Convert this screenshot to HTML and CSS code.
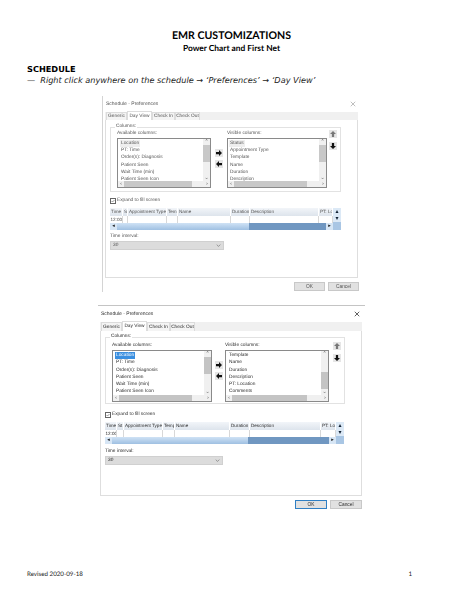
FILE: index.html
```html
<!DOCTYPE html>
<html lang="en">
<head>
<meta charset="utf-8">
<title>EMR Customizations</title>
<link rel="stylesheet" href="styles.css">
</head>
<body>
<main class="page">
  <header class="doc-head">
    <h1>EMR CUSTOMIZATIONS</h1>
    <h2>Power Chart and First Net</h2>
  </header>
  <h3 class="section">SCHEDULE</h3>
  <p class="step"><span class="dash">—</span><em>Right click anywhere on the schedule → ‘Preferences’ → ‘Day View’</em></p>

  <section class="dialog dialog-a">
    <div class="titlebar"><span>Schedule - Preferences</span>
      <svg class="close" viewBox="0 0 8 8"><path d="M1 1l6 6M7 1l-6 6"/></svg></div>
    <div class="tabs"><span class="tab t1">Generic</span><span class="tab t2 on">Day View</span><span class="tab t3">Check In</span><span class="tab t4">Check Out</span></div>
    <div class="panel">
      <fieldset class="group">
        <legend>Columns:</legend>
        <div class="cols">
          <div class="col col-left">
            <div class="cap">Available columns:</div>
            <div class="list">
              <ul><li><b class="soft">Location</b></li><li>PT: Time</li><li>Order(s): Diagnosis</li><li>Patient Seen</li><li>Wait Time (min)</li><li>Patient Seen Icon</li></ul>
              <div class="vbar"><i>⌃</i><s class="th-top"></s><i>⌄</i></div>
              <div class="hbar"><i>‹</i><s></s><i>›</i></div>
            </div>
          </div>
          <div class="movers">
            <button class="icon"><svg viewBox="0 0 8 8"><path d="M0 2.500h4V0l4 4-4 4V5.500H0z"/></svg></button>
            <button class="icon"><svg viewBox="0 0 8 8"><path d="M8 2.500H4V0L0 4l4 4V5.500h4z"/></svg></button>
          </div>
          <div class="col col-right">
            <div class="cap">Visible columns:</div>
            <div class="list">
              <ul><li><b class="soft">Status</b></li><li>Appointment Type</li><li>Template</li><li>Name</li><li>Duration</li><li>Description</li></ul>
              <div class="vbar"><i>⌃</i><s class="th-top"></s><i>⌄</i></div>
              <div class="hbar"><i>‹</i><s></s><i>›</i></div>
            </div>
          </div>
          <div class="order">
            <button class="icon pale"><svg viewBox="0 0 8 8"><path d="M2.500 8V4H0l4-4 4 4H5.500v4z"/></svg></button>
            <button class="icon"><svg viewBox="0 0 8 8"><path d="M2.500 0v4H0l4 4 4-4H5.500V0z"/></svg></button>
          </div>
        </div>
      </fieldset>
      <label class="check"><span class="box"><svg viewBox="0 0 8 8"><path d="M1 4l2 2 4-4"/></svg></span>Expand to fill screen</label>
      <div class="table">
        <div class="thead"><span>Time</span><span>St</span><span>Appointment Type</span><span>Temp</span><span>Name</span><span>Duration</span><span>Description</span><span>PT: Lo</span></div>
        <div class="trow"><span>12:00</span><span></span><span></span><span></span><span></span><span></span><span></span><span></span></div>
        <div class="tscroll"><i>◂</i><s></s><i>▸</i></div>
        <div class="tvbar"><i>▴</i><i>▾</i></div>
      </div>
      <div class="cap interval">Time interval:</div>
      <div class="select"><span>30</span><svg viewBox="0 0 8 5"><path d="M1 1l3 3 3-3"/></svg></div>
    </div>
    <div class="actions"><button class="btn">OK</button><button class="btn">Cancel</button></div>
  </section>

  <section class="dialog dialog-b">
    <div class="titlebar"><span>Schedule - Preferences</span>
      <svg class="close" viewBox="0 0 8 8"><path d="M1 1l6 6M7 1l-6 6"/></svg></div>
    <div class="tabs"><span class="tab t1">Generic</span><span class="tab t2 on">Day View</span><span class="tab t3">Check In</span><span class="tab t4">Check Out</span></div>
    <div class="panel">
      <fieldset class="group">
        <legend>Columns:</legend>
        <div class="cols">
          <div class="col col-left">
            <div class="cap">Available columns:</div>
            <div class="list">
              <ul><li><b class="sel">Location</b></li><li>PT: Time</li><li>Order(s): Diagnosis</li><li>Patient Seen</li><li>Wait Time (min)</li><li>Patient Seen Icon</li></ul>
              <div class="vbar"><i>⌃</i><s class="th-top"></s><i>⌄</i></div>
              <div class="hbar"><i>‹</i><s></s><i>›</i></div>
            </div>
          </div>
          <div class="movers">
            <button class="icon"><svg viewBox="0 0 8 8"><path d="M0 2.500h4V0l4 4-4 4V5.500H0z"/></svg></button>
            <button class="icon"><svg viewBox="0 0 8 8"><path d="M8 2.500H4V0L0 4l4 4V5.500h4z"/></svg></button>
          </div>
          <div class="col col-right">
            <div class="cap">Visible columns:</div>
            <div class="list">
              <ul><li>Template</li><li>Name</li><li>Duration</li><li>Description</li><li>PT: Location</li><li>Comments</li></ul>
              <div class="vbar"><i>⌃</i><s class="th-bottom"></s><i>⌄</i></div>
              <div class="hbar"><i>‹</i><s></s><i>›</i></div>
            </div>
          </div>
          <div class="order">
            <button class="icon pale"><svg viewBox="0 0 8 8"><path d="M2.500 8V4H0l4-4 4 4H5.500v4z"/></svg></button>
            <button class="icon"><svg viewBox="0 0 8 8"><path d="M2.500 0v4H0l4 4 4-4H5.500V0z"/></svg></button>
          </div>
        </div>
      </fieldset>
      <label class="check"><span class="box"><svg viewBox="0 0 8 8"><path d="M1 4l2 2 4-4"/></svg></span>Expand to fill screen</label>
      <div class="table">
        <div class="thead"><span>Time</span><span>St</span><span>Appointment Type</span><span>Temp</span><span>Name</span><span>Duration</span><span>Description</span><span>PT: Lo</span></div>
        <div class="trow"><span>12:00</span><span></span><span></span><span></span><span></span><span></span><span></span><span></span></div>
        <div class="tscroll"><i>◂</i><s></s><i>▸</i></div>
        <div class="tvbar"><i>▴</i><i>▾</i></div>
      </div>
      <div class="cap interval">Time interval:</div>
      <div class="select"><span>30</span><svg viewBox="0 0 8 5"><path d="M1 1l3 3 3-3"/></svg></div>
    </div>
    <div class="actions"><button class="btn btn-default">OK</button><button class="btn">Cancel</button></div>
  </section>

  <footer class="doc-foot"><span>Revised 2020-09-18</span><span>1</span></footer>
</main>
</body>
</html>
```
FILE: styles.css
```css
* { box-sizing: border-box; }
html, body { margin: 0; padding: 0; background: #fff; }
.page {
  width: 463px; height: 599px; overflow: hidden;
  display: flex; flex-direction: column;
  padding: 29px 27px 0;
  font-family: "Lato", "Liberation Sans", sans-serif; color: #000;
  text-rendering: geometricPrecision;
}
.doc-head { text-align: center; }
h1 { margin: 0; font-size: 10.6px; line-height: 14px; font-weight: 700; }
h2 { margin: 0; font-size: 8.4px; line-height: 11px; font-weight: 700; }
.section {
  margin: 10px 0 0; font: 700 8.2px/11px "DejaVu Sans", sans-serif; color: #000;
}
.step {
  margin: 0; font: italic 8.2px/11px "DejaVu Sans", sans-serif; color: #222;
  display: flex; gap: 5px; white-space: nowrap;
}
.dash { color: #555; font-style: normal; }

/* Dialog screenshots: shared structure, sizes per variant */
.dialog {
  --ink: #333;
  display: flex; flex-direction: column;
  font: 4.8px/7px "Liberation Sans", sans-serif; color: var(--ink);
  filter: blur(.25px);
  flex: none; background: #fff;
}
.dialog-a {
  --ink: #555; --tabh: 8px; --rowh: 7.2px; --listh: 50px; --capw: 94px; --rightw: 100px;
  --thumb: #c8c8c8; --btnw: 31px;
  width: 258px; height: 196px; margin: 10px 0 0 75px;
  border-left: 1px solid #d4d4d4; padding: 0 2px 0 2px;
}
.dialog-b {
  --ink: #2c2c2c; --tabh: 9px; --rowh: 7.3px; --listh: 52px; --capw: 100px; --rightw: 104px;
  --thumb: #c4c4c4; --btnw: 32px;
  width: 267px; height: 205px; margin: 13px 0 0 71px;
  border-top: 1px solid #c4c4c4; padding: 0 3px 0 2px;
}
.titlebar {
  display: flex; justify-content: space-between; align-items: center;
  height: 16px; padding: 0 2px 0 1px; font-size: 5px;
}
.close { width: 6px; height: 6px; fill: none; stroke: var(--ink); stroke-width: 1; }
.dialog-a .close { stroke: #aaa; }
.tabs { display: flex; height: var(--tabh); padding-left: 1px; background: #f0f0f0; white-space: nowrap; }
.tab {
  display: flex; align-items: center; justify-content: center;
  border: 1px solid #dcdcdc; border-bottom: 0; background: #f4f4f4;
}
.t1 { width: 21px; } .t2 { width: 25px; } .t3 { width: 23px; } .t4 { width: 25px; }
.tab.on { background: #fff; margin-top: -1px; height: calc(var(--tabh) + 1px); }
.panel {
  height: 0; flex: 1 1 0; border: 1px solid #dedede; border-top: 0; background: #fff;
  padding: 4px 0 0 4px;
  display: flex; flex-direction: column; align-items: flex-start;
}
.dialog-b .panel { padding-top: 3px; }
.group {
  margin: 0; padding: 0 0 0 6px; border: 1px solid #e2e2e2; min-width: 0;
  width: 231px; height: 68px;
}
.dialog-b .group { width: 240px; height: 70px; }
.group legend { padding: 0 1px; margin-left: -2px; line-height: 6px; }
.cols { display: flex; align-items: flex-start; }
.cap { line-height: 7px; color: var(--ink); white-space: nowrap; }
.col { display: flex; flex-direction: column; gap: 1px; }
.col-left { width: var(--capw); }
.col-right { width: var(--rightw); }
.dialog-b .col { padding-top: 2px; }
.list {
  height: var(--listh); border: 1px solid #8a8a8a; background: #fff;
  display: grid; grid-template-columns: 1fr 7px; grid-template-rows: 1fr 6px;
  overflow: hidden;
}
.list ul { margin: 0; padding: 1px 0 0 3px; list-style: none; overflow: hidden; }
.dialog-a .col-right ul { padding-left: 2px; }
.list li { height: var(--rowh); line-height: var(--rowh); white-space: nowrap; }
.list b { font-weight: 400; display: inline-block; padding: 0 1px; margin-left: -1px; }
.soft { background: #eee; }
.sel { background: #3a8fe0; color: #fff; }
.vbar {
  display: flex; flex-direction: column; align-items: center; justify-content: space-between;
  background: #f0f0f0;
}
.vbar i, .hbar i { font: normal 5px/6px "DejaVu Sans", sans-serif; color: #555; width: 6px; text-align: center; flex: none; }
.vbar s { display: block; width: 100%; background: var(--thumb); flex: 0 0 17px; }
.vbar .th-top { margin-bottom: auto; }
.vbar .th-bottom { margin-top: auto; }
.hbar { grid-column: 1 / -1; display: flex; align-items: center; background: #f0f0f0; }
.hbar s { display: block; height: 100%; background: var(--thumb); width: 74%; margin-right: auto; }
.movers {
  width: 16px; display: flex; flex-direction: column; align-items: center;
  gap: 3px; padding-top: 19px;
}
.dialog-b .movers { width: 13px; padding-top: 21px; }
.order { display: flex; flex-direction: column; gap: 4px; padding: 0 0 0 2px; }
.dialog-b .order { padding: 2px 0 0 4px; }
.icon {
  width: 8px; height: 8px; padding: 1px; border: 0; background: #e6e6e6; display: flex;
}
.icon svg { width: 100%; height: 100%; fill: #111; }
.icon.pale svg { fill: #777; }
.check {
  display: flex; align-items: center; gap: 1px; height: 7px; margin: 5px 0 0 0; white-space: nowrap; color: var(--ink);
}
.dialog-b .check { margin-top: 7px; }
.box { width: 6px; height: 6px; border: 1px solid #666; display: flex; background: #fff; }
.box svg { width: 100%; height: 100%; fill: none; stroke: #555; stroke-width: 1.2; }
.table {
  margin-top: 4px; width: 231px; height: 22px;
  display: grid; grid-template-columns: 223px 8px; grid-template-rows: 8px 7px 7px;
  background: #cfe0f1;
}
.dialog-b .table { width: 239px; grid-template-columns: 231px 8px; }
.thead, .trow { display: grid; grid-template-columns: 13px 5px 39px 11px 53px 19px 69px 14px; white-space: nowrap; overflow: hidden; }
.dialog-b .thead, .dialog-b .trow { grid-template-columns: 12px 7px 39px 12px 55px 20px 71px 15px; }
.thead { background: linear-gradient(#f2f5f9, #dde4ec); }
.thead span { border-right: 1px solid #fff; padding-left: 1px; overflow: hidden; line-height: 8px; font-size: 4.6px; }
.trow { background: #fff; grid-column: 1; }
.trow span { border-right: 1px solid #d8d8d8; padding-left: .5px; line-height: 7px; overflow: hidden; font-size: 4.6px; }
.tscroll { grid-column: 1; display: flex; align-items: center; background: #7097c1; }
.tscroll i { width: 7px; height: 100%; flex: none; background: #d7e6f5; color: #111; font: normal 5px/7px "DejaVu Sans", sans-serif; text-align: center; }
.tscroll s { display: block; height: 100%; background: linear-gradient(#cfe2f5, #9fc0e2); flex: 0 0 59%; margin-right: auto; }
.tvbar { grid-column: 2; grid-row: 1 / 4; background: #a9c6e4; display: flex; flex-direction: column; }
.tvbar i { height: 7px; background: #dce9f6; font: normal 6px/7px "DejaVu Sans", sans-serif; color: #123; text-align: center; }
.interval { margin-top: 3px; }
.dialog-b .interval { margin-top: 4px; }
.select {
  margin-top: 1px; width: 114px; height: 9px; background: #dcdcdc; border: 1px solid #d0d0d0;
  display: flex; align-items: center; justify-content: space-between; padding: 0 2px;
}
.dialog-b .select { width: 118px; }
.select svg { width: 5px; height: 3px; fill: none; stroke: #666; stroke-width: 1; }
.actions { display: flex; justify-content: flex-end; gap: 3px; height: 14px; padding-top: 4px; }
.dialog-a .actions { margin-right: -1px; }
.btn {
  width: var(--btnw); height: 9px; padding: 0; background: #e1e1e1; border: 1px solid #c8c8c8;
  font: 4.8px/7px "Liberation Sans", sans-serif; color: var(--ink);
}
.btn-default { border-color: #2f7fc4; }
.doc-foot {
  margin-top: auto; margin-bottom: 20px; display: flex; justify-content: space-between;
  font: 6.2px/8px "Lato", sans-serif; color: #222; padding-right: 24px;
}
```
